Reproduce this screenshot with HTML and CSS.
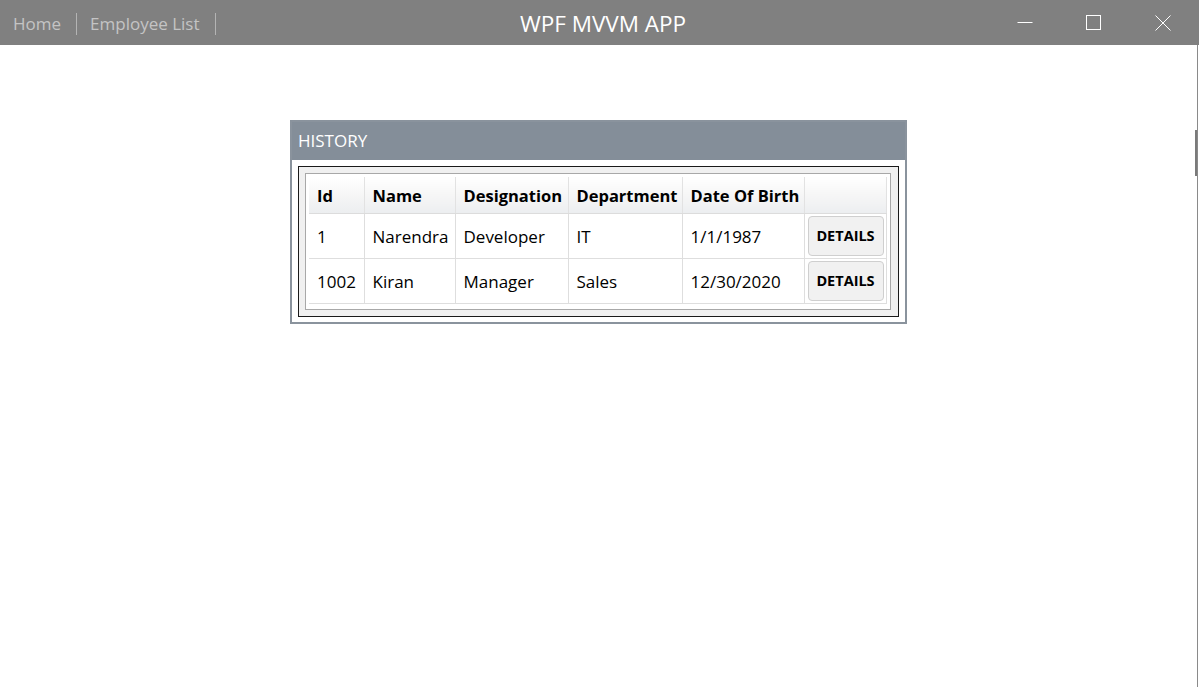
FILE: index.html
```html
<!DOCTYPE html>
<html>
<head>
<meta charset="utf-8">
<title>WPF MVVM APP</title>
<link rel="stylesheet" href="styles.css">
</head>
<body>
<div class="window">
  <header class="titlebar">
    <nav class="menu">
      <span class="menu-item">Home</span>
      <span class="sep"></span>
      <span class="menu-item">Employee List</span>
      <span class="sep"></span>
    </nav>
    <div class="title">WPF MVVM APP</div>
    <div class="controls">
      <span class="ctrl">
        <svg width="16" height="16" viewBox="0 0 16 16"><path d="M0.5 7.5H15.5" stroke="#fff" stroke-width="1" fill="none"/></svg>
      </span>
      <span class="ctrl">
        <svg width="16" height="16" viewBox="0 0 16 16"><rect x="0.5" y="0.5" width="14" height="14" stroke="#fff" stroke-width="1" fill="none"/></svg>
      </span>
      <span class="ctrl">
        <svg width="16" height="16" viewBox="0 0 16 16"><path d="M0.5 0.5L15.5 15.5M15.5 0.5L0.5 15.5" stroke="#fff" stroke-width="1" fill="none"/></svg>
      </span>
    </div>
  </header>
  <main class="content">
    <span class="grip"></span>
    <section class="panel">
      <div class="panel-header">HISTORY</div>
      <div class="panel-body">
        <div class="frame">
          <div class="grid-box">
            <table class="grid">
              <colgroup>
                <col class="c-id"><col class="c-name"><col class="c-des"><col class="c-dep"><col class="c-dob"><col class="c-btn">
              </colgroup>
              <thead>
                <tr><th>Id</th><th>Name</th><th>Designation</th><th>Department</th><th>Date Of Birth</th><th></th></tr>
              </thead>
              <tbody>
                <tr><td>1</td><td>Narendra</td><td>Developer</td><td>IT</td><td>1/1/1987</td><td class="btn-cell"><button class="btn">DETAILS</button></td></tr>
                <tr><td>1002</td><td>Kiran</td><td>Manager</td><td>Sales</td><td>12/30/2020</td><td class="btn-cell"><button class="btn">DETAILS</button></td></tr>
              </tbody>
            </table>
          </div>
        </div>
      </div>
    </section>
  </main>
</div>
</body>
</html>
```
FILE: styles.css
```css
html, body {
  margin: 0;
  padding: 0;
  background: #ffffff;
}
body {
  font-family: "Open Sans", "Noto Sans", "DejaVu Sans", sans-serif;
  color: #000;
}
.window {
  width: 1199px;
  height: 687px;
  display: flex;
  flex-direction: column;
  overflow: hidden;
}
.titlebar {
  height: 45px;
  flex: 0 0 45px;
  background: #808080;
  display: grid;
  grid-template-columns: 1fr auto 1fr;
  align-items: center;
}
.menu {
  display: flex;
  align-items: center;
  padding-left: 13px;
  padding-top: 2px;
  color: #c4c4c4;
  font-size: 17px;
}
.menu-item {
  line-height: 24px;
}
.sep {
  width: 1px;
  height: 22px;
  background: #b4b4b4;
  margin: 0 13px 0 15px;
}
.title {
  color: #ffffff;
  font-size: 22.5px;
  padding-left: 7px;
  padding-top: 1px;
}
.controls {
  display: flex;
  justify-content: flex-end;
  padding-right: 2px;
  height: 45px;
}
.ctrl {
  width: 69px;
  display: flex;
  align-items: center;
  justify-content: center;
}
.content {
  flex: 1;
  position: relative;
  border-right: 1px solid #8a8a8a;
  margin-right: 1px;
  padding: 75px 0 0 290px;
}
.grip {
  position: absolute;
  right: 0;
  top: 85px;
  width: 2px;
  height: 46px;
  background: #7a7a7a;
}
.panel {
  width: 613px;
  border: 2px solid #8a939d;
  background: #fff;
}
.panel-header {
  background: #848e99;
  height: 38px;
  color: #fff;
  font-size: 17px;
  line-height: 38px;
  padding-left: 6px;
}
.panel-body {
  padding: 6px 6px 5px 6px;
}
.frame {
  border: 1px solid #1a1a1a;
  background: #f0f0f0;
  padding: 6px 7px 6px 6px;
}
.grid-box {
  border: 1px solid #a8a8a8;
  background: #fff;
  padding: 3px 3px 5px 3px;
}
.grid {
  border-collapse: collapse;
  table-layout: fixed;
  width: 577px;
}
.c-id { width: 55px; }
.c-name { width: 91px; }
.c-des { width: 113px; }
.c-dep { width: 114px; }
.c-dob { width: 122px; }
.c-btn { width: 82px; }
.grid th {
  height: 36px;
  padding: 2px 0 0 8px;
  box-sizing: border-box;
  text-align: left;
  font-size: 16.5px;
  font-weight: 700;
  white-space: nowrap;
  background: linear-gradient(#ffffff, #f6f6f6 50%, #eceef0);
  border-right: 1px solid #e2e2e2;
  border-bottom: 1px solid #dcdcdc;
}
.grid td {
  height: 45px;
  box-sizing: border-box;
  padding: 2px 0 0 8px;
  font-size: 17px;
  white-space: nowrap;
  border: 1px solid #dedede;
  border-top: none;
}
.grid tr td:first-child { border-left: none; }
.grid td.btn-cell {
  padding: 0 3px;
  text-align: center;
}
.btn {
  width: 76px;
  height: 40px;
  border: 1px solid #cfcfcf;
  border-radius: 4px;
  background: #f1f1f1;
  font-family: "Open Sans", "Noto Sans", sans-serif;
  font-size: 14.5px;
  font-weight: 700;
  color: #000;
  padding: 0;
}
```
